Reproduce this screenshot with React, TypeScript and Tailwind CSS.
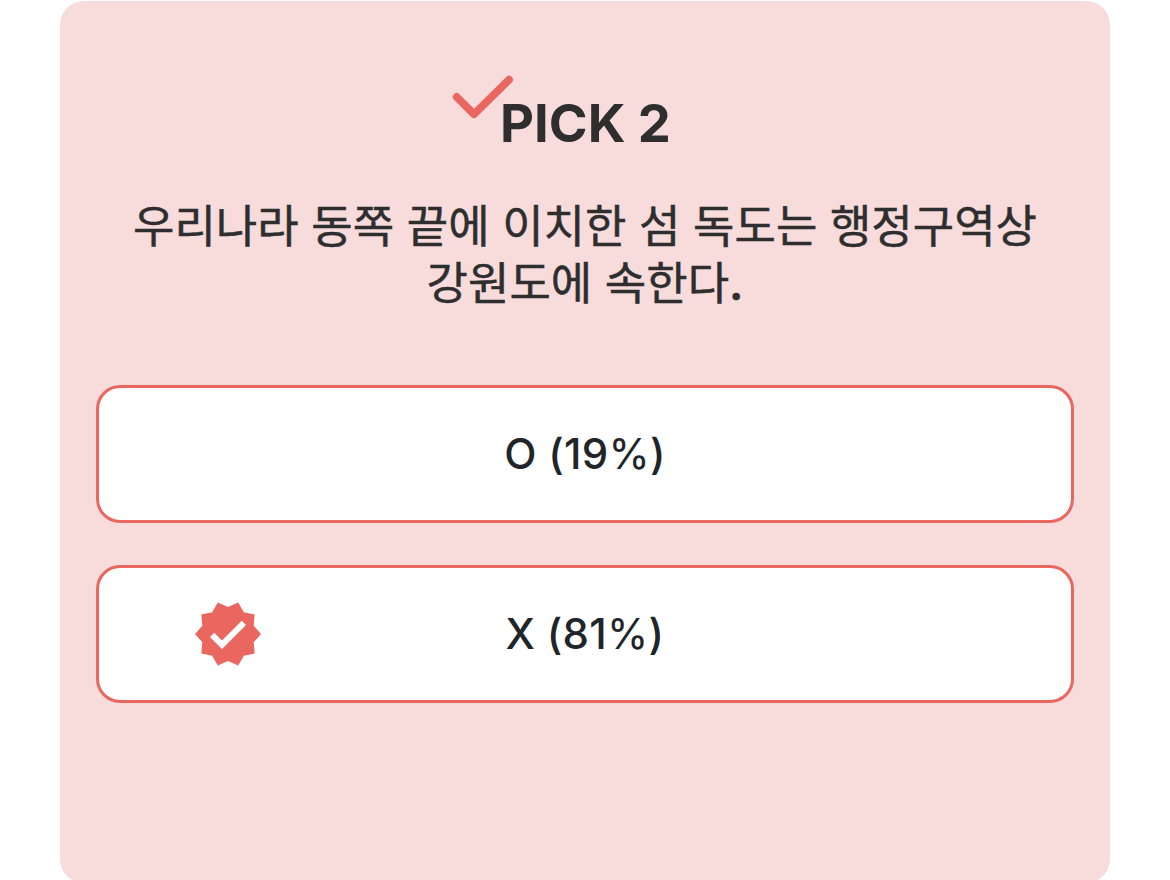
const options = [
  { label: 'O', percent: 19, picked: false },
  { label: 'X', percent: 81, picked: true },
];

function VerifiedIcon() {
  return (
    <svg
      viewBox="0 0 24 24"
      className="absolute top-[30px] left-[93px] size-[72px] fill-[#ea675f]"
    >
      <path d="M23 12l-2.44-2.78.34-3.68-3.61-.82-1.89-3.18L12 3 8.6 1.54 6.71 4.72l-3.61.81.34 3.68L1 12l2.44 2.78-.34 3.69 3.61.82 1.89 3.18L12 21l3.4 1.46 1.89-3.18 3.61-.82-.34-3.68L23 12zm-13 5l-4-4 1.41-1.41L10 14.17l6.59-6.59L18 9l-8 8z" />
    </svg>
  );
}

export default function App() {
  return (
    <main className="h-[880px] overflow-hidden bg-white px-[60px] pt-px font-['Inter','Noto_Sans_CJK_KR',sans-serif]">
      <section className="h-[882px] rounded-[24px] bg-[#f8dcdc] px-9 pt-[89px]">
        <h1 className="relative mx-auto w-fit pl-px text-[52.5px] leading-[66px] font-bold text-[#2e2e2e]">
          <svg
            viewBox="0 0 62 46"
            className="absolute -top-4 -left-[48px] h-[46px] w-[62px] fill-none stroke-[#ea675f]"
            strokeWidth="7.8"
            strokeLinecap="round"
            strokeLinejoin="round"
          >
            <path d="M5.7 23 23 40.2 58 5.7" />
          </svg>
          PICK 2
        </h1>
        <p className="mt-[42px] text-center text-[45px] leading-[57px] text-[#2e2e2e] [-webkit-text-stroke:0.5px_#2e2e2e]">
          우리나라 동쪽 끝에 이치한 섬 독도는 행정구역상
          <br />
          강원도에 속한다
          <span className="font-semibold">.</span>
        </p>
        <div className="mt-[73px] flex flex-col gap-[42px]">
          {options.map(({ label, percent, picked }) => (
            <button
              key={label}
              className="relative flex h-[138px] items-center justify-center rounded-[24px] border-3 border-[#ea675f] bg-white pb-0.5 text-[42px] font-medium tracking-[0.3px] text-[#212529] [font-feature-settings:'calt'_0]"
            >
              {picked && <VerifiedIcon />}
              <span>
                {label} ({percent}
                <span className="font-normal">%</span>)
              </span>
            </button>
          ))}
        </div>
      </section>
    </main>
  );
}
